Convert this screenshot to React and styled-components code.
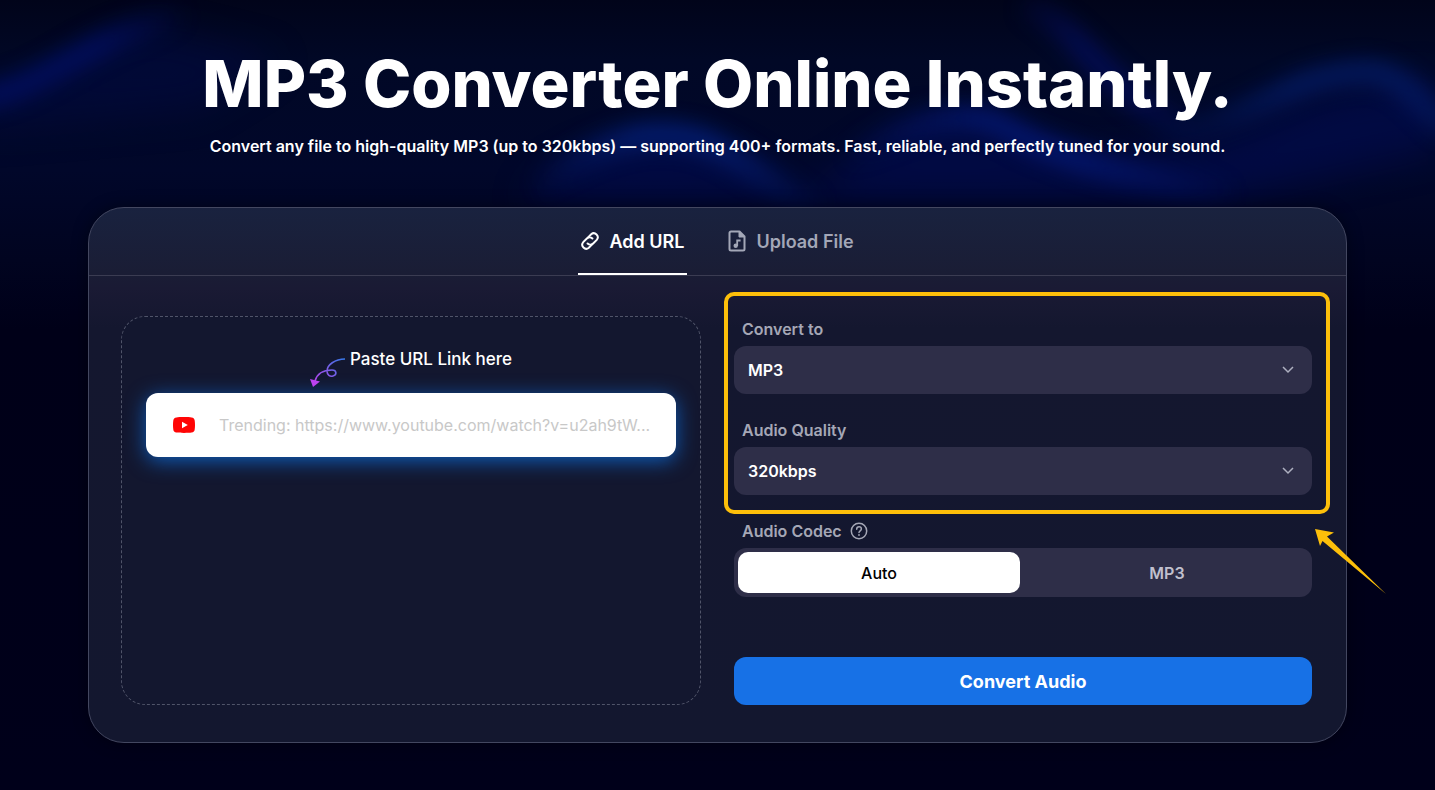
import React, { useState } from 'react';
import styled, { createGlobalStyle } from 'styled-components';

const GlobalStyle = createGlobalStyle`
  * {
    box-sizing: border-box;
  }
  body {
    margin: 0;
    background: #00001a;
    color: #ffffff;
    font-family: 'Inter', 'Open Sans', sans-serif;
  }
  button,
  input,
  select {
    font-family: inherit;
  }
`;

const Page = styled.div`
  position: relative;
  min-height: 100vh;
  overflow: hidden;
  padding: 48px 24px;
  background: linear-gradient(180deg, #01041a 0, #010826 60px, #01072a 170px, #010420 260px, #000018 330px, #00001a 100%);
`;

const Waves = styled.svg`
  position: absolute;
  top: 0;
  left: 0;
  width: 100%;
  height: 320px;
`;

const Content = styled.main`
  position: relative;
  max-width: 1259px;
  margin: 0 auto;
`;

const Title = styled.h1`
  margin: 0;
  font-size: 65px;
  line-height: 72px;
  font-weight: 800;
  text-align: center;
`;

const Subtitle = styled.p`
  margin: 14px 0 0;
  font-size: 16px;
  line-height: 24px;
  font-weight: 600;
  text-align: center;
`;

const Card = styled.section`
  margin-top: 49px;
  border: 1px solid #434760;
  border-radius: 36px;
  background: linear-gradient(180deg, #19223f 0, #1a1d35 64px, #1a1a34 80px, #14172f 120px, #13172f 100%);
  box-shadow: 0 0 16px rgba(0, 0, 0, 0.4);
`;

const Tabs = styled.div`
  display: flex;
  justify-content: center;
  gap: 38px;
  height: 68px;
  border-bottom: 1px solid #3b3c52;
`;

const Tab = styled.button`
  display: flex;
  align-items: center;
  gap: 10px;
  padding: 1px 3px 0;
  border: 0;
  border-bottom: 2px solid ${(props) => (props.$active ? '#ffffff' : 'transparent')};
  background: none;
  color: ${(props) => (props.$active ? '#ffffff' : '#a3a7b7')};
  font-size: 18px;
  font-weight: 600;
  cursor: pointer;
`;

const Panels = styled.div`
  display: grid;
  grid-template-columns: 580fr 578fr;
  gap: 33px;
  padding: 40px 34px 37px 32px;
`;

const DropZone = styled.div`
  padding: 29px 24px;
  border: 1px dashed #505469;
  border-radius: 24px;
  background: #13172f;
`;

const Hint = styled.label`
  display: flex;
  justify-content: center;
  gap: 4px;
  font-size: 17px;
  line-height: 26px;
  font-weight: 500;
`;

const HintArrow = styled.svg`
  margin-top: 12px;
`;

const UrlBox = styled.div`
  display: flex;
  align-items: center;
  gap: 24px;
  height: 64px;
  margin-top: 5px;
  padding: 0 11px 0 27px;
  border-radius: 12px;
  background: #ffffff;
  box-shadow: 0 4px 20px #0f5cb8;
`;

const UrlInput = styled.input`
  flex: 1;
  min-width: 0;
  padding: 0;
  border: 0;
  outline: none;
  background: transparent;
  color: #14172f;
  font-size: 16px;
  line-height: 24px;
  text-overflow: ellipsis;
  &::placeholder {
    color: #c8c8c8;
    opacity: 1;
  }
`;

const Options = styled.div`
  display: flex;
  flex-direction: column;
`;

const Highlighted = styled.div`
  position: relative;
  display: flex;
  flex-direction: column;
  gap: 23px;
  &::after {
    content: '';
    position: absolute;
    inset: -24px -18px -19px -10px;
    border: 4px solid #fdbf0a;
    border-radius: 10px;
    pointer-events: none;
  }
`;

const Pointer = styled.svg`
  position: absolute;
  top: 212px;
  right: -75px;
`;

const Field = styled.div`
  display: flex;
  flex-direction: column;
  gap: 4px;
`;

const Label = styled.label`
  display: flex;
  align-items: center;
  gap: 8px;
  padding-left: 8px;
  color: #a5a7b6;
  font-size: 16px;
  line-height: 26px;
  font-weight: 600;
`;

const SelectWrap = styled.div`
  position: relative;
`;

const Select = styled.select`
  width: 100%;
  height: 48px;
  padding: 0 40px 0 14px;
  border: 0;
  border-radius: 12px;
  appearance: none;
  background: #2e2e48;
  color: #ffffff;
  font-size: 16px;
  font-weight: 600;
`;

const Chevron = styled.svg`
  position: absolute;
  top: 20px;
  right: 18px;
  pointer-events: none;
`;

const Codec = styled.div`
  margin-top: 23px;
`;

const Segments = styled.div`
  display: grid;
  grid-template-columns: 1fr 1fr;
  gap: 6px;
  height: 49px;
  margin-top: 4px;
  padding: 4px;
  border-radius: 12px;
  background: #2e2e48;
`;

const Segment = styled.button`
  border: 0;
  border-radius: 10px;
  background: ${(props) => (props.$active ? '#ffffff' : 'transparent')};
  color: ${(props) => (props.$active ? '#000000' : '#c0c0ce')};
  font-size: 16px;
  font-weight: ${(props) => (props.$active ? 500 : 600)};
  cursor: pointer;
`;

const ConvertButton = styled.button`
  height: 48px;
  margin-top: 60px;
  border: 0;
  border-radius: 12px;
  background: #1771e6;
  color: #ffffff;
  font-size: 18px;
  font-weight: 700;
  cursor: pointer;
`;

const Fade = ({ id, x1, x2, color, from = 0 }) => (
  <linearGradient id={id} x1={x1} y1="0" x2={x2} y2="0" gradientUnits="userSpaceOnUse">
    <stop stopColor={color} stopOpacity={from} />
    <stop offset="0.35" stopColor={color} />
    <stop offset="0.6" stopColor={color} />
    <stop offset="1" stopColor={color} stopOpacity="0" />
  </linearGradient>
);

const Background = () => (
  <Waves viewBox="0 0 1435 320" preserveAspectRatio="none" fill="none" aria-hidden="true">
    <defs>
      <filter id="soft" x="-20%" y="-40%" width="140%" height="180%" colorInterpolationFilters="sRGB">
        <feGaussianBlur stdDeviation="10" />
      </filter>
      <filter id="wide" x="-20%" y="-60%" width="140%" height="220%" colorInterpolationFilters="sRGB">
        <feGaussianBlur stdDeviation="18" />
      </filter>
      <Fade id="left" x1="-40" x2="190" color="#020f66" from={1} />
      <Fade id="middle" x1="530" x2="830" color="#04207a" />
      <Fade id="center" x1="840" x2="1240" color="#041878" />
      <Fade id="falling" x1="1010" x2="1210" color="#030d5a" />
      <Fade id="right" x1="1150" x2="1560" color="#041b66" />
    </defs>
    <g filter="url(#wide)" opacity="0.6">
      <path d="M-20 100C60 90 90 35 160 30L280 60L200 110L-20 130z" fill="#020a40" />
      <path d="M520 200C600 130 680 125 740 160L800 195L900 130C970 110 1030 140 1090 160L1180 150C1250 140 1300 80 1440 80L1440 150L1220 200z" fill="#020c54" />
    </g>
    <g filter="url(#soft)" strokeWidth="26" opacity="0.75">
      <path d="M-20 98C50 86 80 40 190 14" stroke="url(#left)" />
      <path d="M520 195C590 145 640 127 690 138S760 185 835 210" stroke="url(#middle)" />
      <path d="M840 160C920 118 970 105 1010 130S1120 175 1250 195" stroke="url(#center)" />
      <path d="M1020 5C1090 30 1100 100 1210 135" stroke="url(#falling)" />
      <path d="M1140 135C1250 130 1280 72 1370 72C1400 74 1420 100 1450 130" stroke="url(#right)" />
    </g>
  </Waves>
);

const LinkIcon = () => (
  <svg width="18" height="18" viewBox="2 2 20 20" fill="none" stroke="currentColor" strokeWidth="2.200" strokeLinecap="round">
    <path d="M9.600 8.200l3.700-3.700a4.400 4.400 0 0 1 6.200 6.200l-4 4a4.400 4.400 0 0 1-6.200 0" />
    <path d="M14.400 15.800l-3.700 3.700a4.400 4.400 0 0 1-6.200-6.200l4-4a4.400 4.400 0 0 1 6.200 0" />
  </svg>
);

const MusicFileIcon = () => (
  <svg width="18" height="22" viewBox="0 0 18 22" fill="none" stroke="currentColor" strokeWidth="2">
    <path d="M11.500 1.500H3A1.500 1.500 0 0 0 1.500 3v16A1.500 1.500 0 0 0 3 20.500h12a1.500 1.500 0 0 0 1.500-1.500V6.500z" strokeLinejoin="round" />
    <path d="M11 1v6h6" fill="currentColor" strokeWidth="1" />
    <path d="M9.200 16V10.500h3.400" strokeWidth="1.800" />
    <circle cx="7.700" cy="15.800" r="2.200" fill="currentColor" stroke="none" />
  </svg>
);

const CurlArrow = () => (
  <HintArrow width="36" height="30" viewBox="0 0 36 30" fill="none" aria-hidden="true">
    <defs>
      <linearGradient id="curl" x1="36" y1="0" x2="2" y2="28" gradientUnits="userSpaceOnUse">
        <stop stopColor="#2f7bea" />
        <stop offset="0.5" stopColor="#7d5ce6" />
        <stop offset="1" stopColor="#c43df0" />
      </linearGradient>
    </defs>
    <path d="M35 1C25 1 17 7 17 13C17 17 20 19 23 18C27 17 27 12 22 12C13 12 7 16 5 23" stroke="url(#curl)" strokeWidth="1.600" />
    <path d="M0 21L10 23.500L3 29z" fill="#bd42f0" />
  </HintArrow>
);

const YoutubeIcon = () => (
  <svg width="22" height="16" viewBox="0 0 22 16" aria-hidden="true">
    <path d="M3.500.4C6 0 16 0 18.500.4C20.600.700 21.500 1.700 21.700 3.500C22.100 6.500 22.100 9.500 21.700 12.500C21.500 14.300 20.600 15.300 18.500 15.600C16 16 6 16 3.500 15.600C1.400 15.300.500 14.300.300 12.500C-.1 9.500-.1 6.500.300 3.500C.5 1.700 1.400.7 3.500.4z" fill="#ff0505" />
    <path d="M9 4.800L14.800 8L9 11.200z" fill="#ffffff" />
  </svg>
);

const HelpIcon = () => (
  <svg width="18" height="18" viewBox="0 0 18 18" fill="none" stroke="currentColor" strokeWidth="1.500" strokeLinecap="round">
    <circle cx="9" cy="9" r="7.700" />
    <path d="M6.700 7.200C6.700 4 11.400 4.200 11.400 7C11.400 8.800 9 8.900 9 10.600" />
    <circle cx="9" cy="13" r="0.300" />
  </svg>
);

const SelectField = ({ id, label, options }) => (
  <Field>
    <Label htmlFor={id}>{label}</Label>
    <SelectWrap>
      <Select id={id}>
        {options.map((option) => (
          <option key={option}>{option}</option>
        ))}
      </Select>
      <Chevron width="12" height="8" viewBox="0 0 12 8" fill="none" stroke="#aeb0c0" strokeWidth="1.500">
        <path d="M1 1l5 5 5-5" />
      </Chevron>
    </SelectWrap>
  </Field>
);

const App = () => {
  const [tab, setTab] = useState('url');
  const [codec, setCodec] = useState('Auto');

  return (
    <Page>
      <GlobalStyle />
      <Background />
      <Content>
        <Title>MP3 Converter Online Instantly.</Title>
        <Subtitle>
          Convert any file to high-quality MP3 (up to 320kbps) — supporting 400+ formats. Fast, reliable, and perfectly tuned for your sound.
        </Subtitle>
        <Card>
          <Tabs role="tablist">
            <Tab role="tab" aria-selected={tab === 'url'} $active={tab === 'url'} onClick={() => setTab('url')}>
              <LinkIcon />
              Add URL
            </Tab>
            <Tab role="tab" aria-selected={tab === 'file'} $active={tab === 'file'} onClick={() => setTab('file')}>
              <MusicFileIcon />
              Upload File
            </Tab>
          </Tabs>
          <Panels>
            <DropZone>
              <Hint htmlFor="url">
                <CurlArrow />
                Paste URL Link here
              </Hint>
              <UrlBox>
                <YoutubeIcon />
                <UrlInput id="url" type="text" placeholder="Trending: https://www.youtube.com/watch?v=u2ah9tW..." />
              </UrlBox>
            </DropZone>
            <Options>
              <Highlighted>
                <SelectField id="format" label="Convert to" options={['MP3', 'WAV', 'FLAC']} />
                <SelectField id="quality" label="Audio Quality" options={['320kbps', '256kbps', '128kbps']} />
                <Pointer width="73" height="67" viewBox="0 0 73 67" aria-hidden="true">
                  <path d="M1 1L20 4.500L13 8.500L72 66L8.500 13L6 18z" fill="#fdbf0a" />
                </Pointer>
              </Highlighted>
              <Codec>
                <Label as="div" id="codec-label">
                  Audio Codec
                  <HelpIcon />
                </Label>
                <Segments role="group" aria-labelledby="codec-label">
                  {['Auto', 'MP3'].map((name) => (
                    <Segment key={name} $active={codec === name} aria-pressed={codec === name} onClick={() => setCodec(name)}>
                      {name}
                    </Segment>
                  ))}
                </Segments>
              </Codec>
              <ConvertButton>Convert Audio</ConvertButton>
            </Options>
          </Panels>
        </Card>
      </Content>
    </Page>
  );
};

export default App;
